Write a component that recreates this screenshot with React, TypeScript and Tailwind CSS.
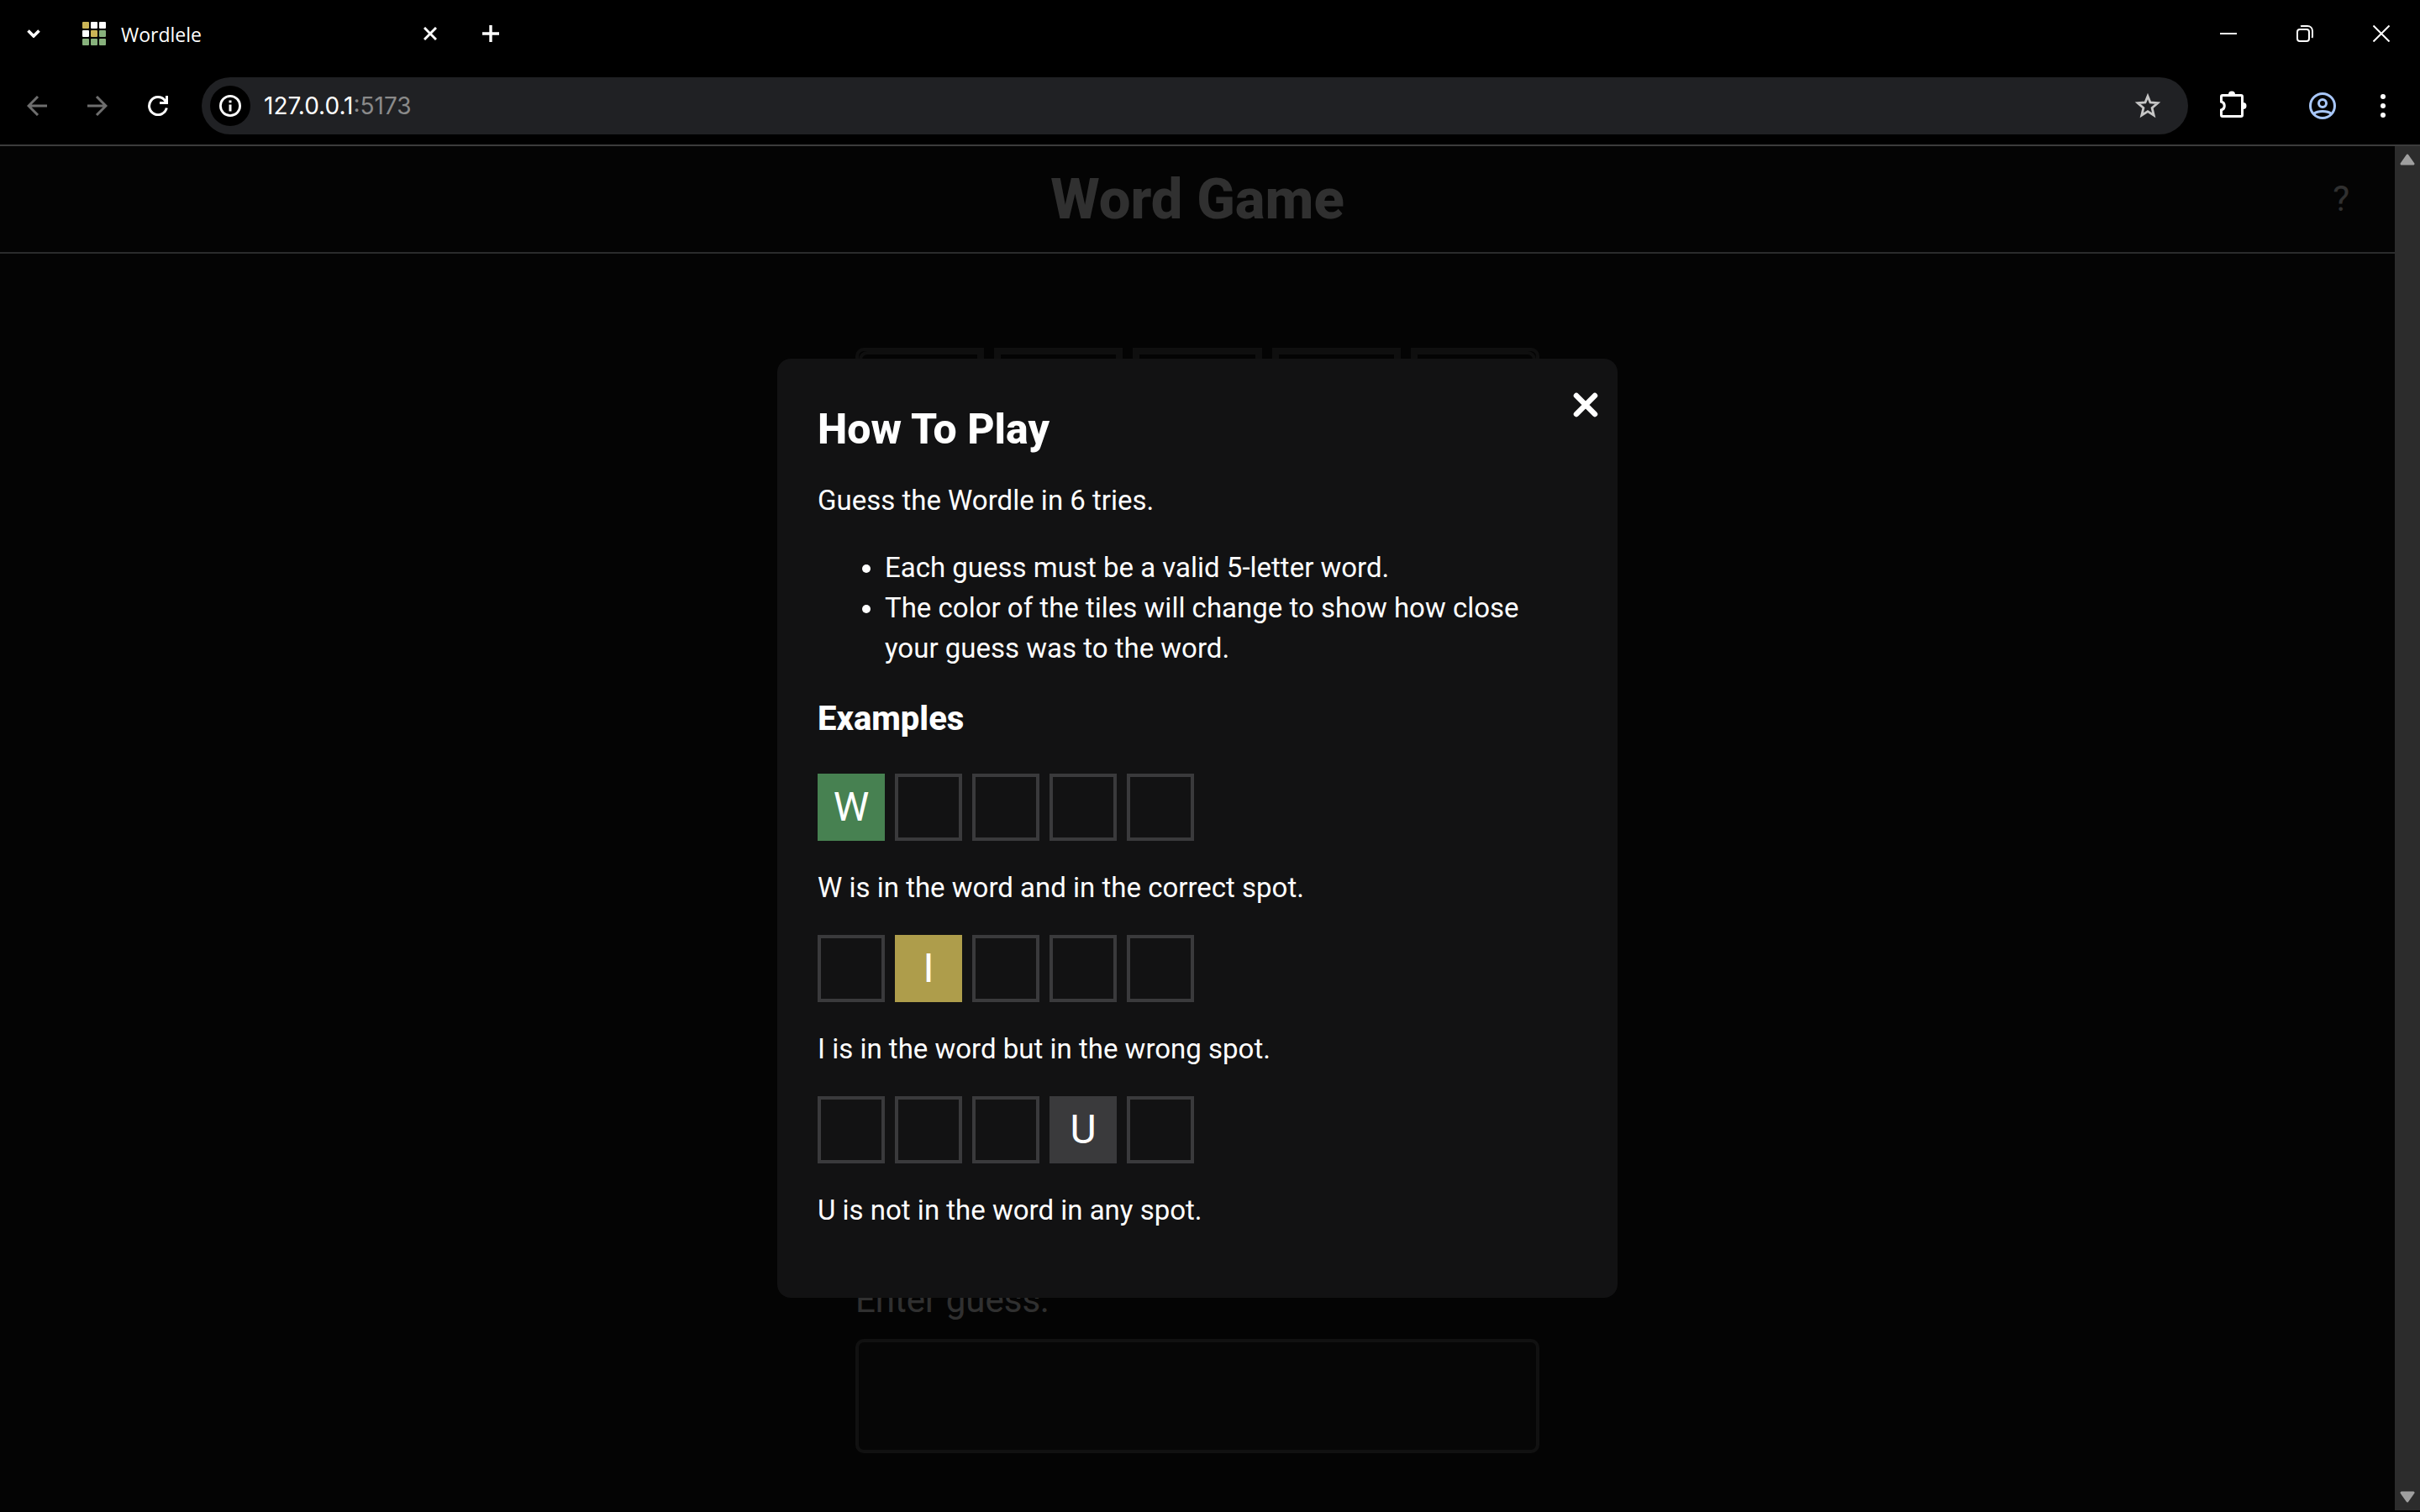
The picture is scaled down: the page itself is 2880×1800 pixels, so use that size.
import { ReactNode } from "react";

function Icon({ w, h, className = "", children }: { w: number; h: number; className?: string; children: ReactNode }) {
  return (
    <svg width={w} height={h} viewBox={`0 0 ${w} ${h}`} fill="none" stroke="currentColor" strokeWidth={3} aria-hidden="true" className={"block shrink-0 " + className}>
      {children}
    </svg>
  );
}

const FAVICON = ["#cbb556", "#ffffff", "#ffffff", "#ffffff", "#cbb556", "#87b17c", "#87b17c", "#87b17c", "#87b17c"];

function TabStrip() {
  return (
    <div className="flex h-20 items-center pr-9 pl-8">
      <button aria-label="Search tabs" className="mr-[50px]">
        <Icon w={16} h={10}><path d="M1.5 1.5 8 8 14.5 1.5" strokeWidth={3.6} /></Icon>
      </button>
      <div className="flex items-center">
        <div className="mr-[18px] grid shrink-0 grid-cols-3 gap-0.5">
          {FAVICON.map((c, i) => (
            <span key={i} className="size-2 rounded-[1px]" style={{ backgroundColor: c }} />
          ))}
        </div>
        <span className="w-[360px] pt-0.5 font-['Open_Sans',sans-serif] text-[23px] leading-8">Wordlele</span>
        <button aria-label="Close tab">
          <Icon w={16} h={16}><path d="M1 1 15 15M15 1 1 15" /></Icon>
        </button>
      </div>
      <button aria-label="New tab" className="ml-[54px]">
        <Icon w={20} h={20}><path d="M10 0V20M0 10H20" strokeWidth={3.4} /></Icon>
      </button>
      <div className="ml-auto flex items-center gap-[71px]">
        <button aria-label="Minimize"><Icon w={20} h={20}><path d="M0 10H20" strokeWidth={2} /></Icon></button>
        <button aria-label="Restore">
          <Icon w={20} h={20}>
            <rect x="1" y="5" width="14" height="14" rx="3" strokeWidth={2} />
            <path d="M5 1.2C5.600 1 6 1 7 1H13C16.500 1 19 3.500 19 7V13C19 14 18.800 14.500 18.500 15" strokeWidth={2} />
          </Icon>
        </button>
        <button aria-label="Close window"><Icon w={20} h={20}><path d="M.5.5 19.5 19.500M19.500.5.5 19.500" strokeWidth={2} /></Icon></button>
      </div>
    </div>
  );
}

function Toolbar() {
  return (
    <div className="flex h-[92px] items-center pr-[41px] pl-8">
      <button aria-label="Back" className="mr-12 text-[#6e6e6e]">
        <Icon w={24} h={24}><path d="M24 12H2M13 1 2 12 13 23" /></Icon>
      </button>
      <button aria-label="Forward" className="mr-12 text-[#6e6e6e]">
        <Icon w={24} h={24}><path d="M0 12H22M11 1 22 12 11 23" /></Icon>
      </button>
      <button aria-label="Reload" className="mr-10">
        <Icon w={24} h={24}>
          <path d="M22.300 14.500A10.500 10.500 0 1 1 20 5.200L22 7.500" />
          <path d="M22.500 0V8.500H14" />
        </Icon>
      </button>
      <div className="flex h-[68px] flex-1 items-center rounded-full bg-[#202124] pr-8 pl-2.5">
        <button aria-label="Site information" className="flex size-12 items-center justify-center rounded-full bg-black">
          <Icon w={26} h={26}>
            <circle cx="13" cy="13" r="11.6" strokeWidth={2.800} />
            <path d="M13 11.500V19.500" />
            <path d="M13 6.500V9.300" />
          </Icon>
        </button>
        <a href="http://127.0.0.1:5173" className="ml-4 flex-1 font-[Inter,sans-serif] text-[28px] leading-9">
          127.0.0.1<span className="text-[#8a8a8a]">:5173</span>
        </a>
        <button aria-label="Bookmark this page" className="text-[#c7c7c7]">
          <Icon w={32} h={32}>
            <path d="M16 4.500 19 12 27.800 12.700 21.100 18.400 23.200 27.200 16 22.600 8.800 27.200 10.900 18.400 4.200 12.700 13 12Z" strokeWidth={2.800} />
          </Icon>
        </button>
      </div>
      <button aria-label="Extensions" className="ml-[38px]">
        <Icon w={32} h={36}>
          <path d="M3 5.500H25Q26.500 5.500 26.500 7V29Q26.500 30.500 25 30.500H3Q1.500 30.500 1.500 29V23A5.200 5.200 0 0 0 1.500 13V7Q1.500 5.500 3 5.500Z" />
          <path d="M10 4.500A4 4 0 0 1 18 4.500ZM27.500 14A4 4 0 0 1 27.500 22Z" fill="currentColor" stroke="none" />
        </Icon>
      </button>
      <button aria-label="Profile" className="ml-[74px] text-[#a8c7fa]">
        <Icon w={32} h={32}>
          <circle cx="16" cy="16" r="14.5" />
          <circle cx="16" cy="13" r="4.5" />
          <path d="M5.500 25.500C8 23.500 12 22.500 16 22.500S24 23.500 26.500 25.500" />
        </Icon>
      </button>
      <button aria-label="Menu" className="ml-[53px]">
        <Icon w={6} h={28}>
          <g fill="currentColor" stroke="none">
            <circle cx="3" cy="3" r="3" />
            <circle cx="3" cy="14" r="3" />
            <circle cx="3" cy="25" r="3" />
          </g>
        </Icon>
      </button>
    </div>
  );
}

function Scrollbar() {
  return (
    <div className="flex w-[30px] shrink-0 flex-col items-center justify-between bg-[#2c2c2c] py-[9px] text-[#9f9f9f]">
      <button aria-label="Scroll up">
        <Icon w={18} h={14}><path d="M9 2 16 12H2Z" fill="currentColor" strokeLinejoin="round" /></Icon>
      </button>
      <button aria-label="Scroll down">
        <Icon w={18} h={14}><path d="M9 12 16 2H2Z" fill="currentColor" strokeLinejoin="round" /></Icon>
      </button>
    </div>
  );
}

function corner(i: number) {
  if (i === 0) return "rounded-tl-[10px]";
  if (i === 4) return "rounded-tr-[10px]";
  if (i === 25) return "rounded-bl-[10px]";
  if (i === 29) return "rounded-br-[10px]";
  return "";
}

function Game() {
  return (
    <div className="flex-1 overflow-hidden bg-[#141414] text-[#f0f0f0]">
      <header className="grid h-32 grid-cols-[1fr_auto_1fr] items-center border-b-2 border-[#d3d6da] px-[54px]">
        <h1 className="col-start-2 text-[67px] leading-[80px] font-extrabold">Word Game</h1>
        <button aria-label="How to play" className="justify-self-end text-[42px] leading-[48px]">?</button>
      </header>
      <main className="mx-auto mt-28 w-full max-w-[814px]">
        <div className="grid grid-cols-5 gap-3">
          {Array.from({ length: 30 }, (_, i) => (
            <div key={i} className={"h-[153px] border-4 border-[#4c4c4c] " + corner(i)}>
              <div className={"h-full border-4 border-[#4c4c4c] " + corner(i)} />
            </div>
          ))}
        </div>
        <label htmlFor="guess" className="mt-[132px] block text-[42px] leading-[48px]">Enter guess:</label>
        <input id="guess" type="text" className="mt-[22px] block h-[136px] w-full rounded-[10px] border-4 border-[#555] bg-[#1e1e1e] px-6 text-[42px]" />
      </main>
    </div>
  );
}

const EXAMPLES = [
  { letter: "W", at: 0, fill: "border-[#478151] bg-[#478151]", text: "W is in the word and in the correct spot." },
  { letter: "I", at: 1, fill: "border-[#ae9d4b] bg-[#ae9d4b]", text: "I is in the word but in the wrong spot." },
  { letter: "U", at: 3, fill: "border-[#3a3a3c] bg-[#3a3a3c]", text: "U is not in the word in any spot." },
];

function HowToPlay() {
  return (
    <section role="dialog" aria-labelledby="how-title" className="relative w-[1000px] max-w-full rounded-2xl bg-[#121213] p-12 text-[33px] leading-[48px] text-white">
      <button aria-label="Close" className="absolute top-10 right-[23px]">
        <Icon w={30} h={30}><path d="M4 4 26 26M26 4 4 26" strokeWidth={6.500} strokeLinecap="round" /></Icon>
      </button>
      <h2 id="how-title" className="text-[50px] leading-[72px] font-extrabold">How To Play</h2>
      <p className="mt-[25px]">Guess the Wordle in 6 tries.</p>
      <ul className="mt-8 list-disc pl-20">
        <li>Each guess must be a valid 5-letter word.</li>
        <li>The color of the tiles will change to show how close your guess was to the word.</li>
      </ul>
      <h3 className="mt-[34px] mb-[39px] text-[40px] leading-[52px] font-extrabold">Examples</h3>
      {EXAMPLES.map((e) => (
        <div key={e.letter} className="mb-8">
          <div className="flex gap-3">
            {[0, 1, 2, 3, 4].map((i) => (
              <div key={i} className={"flex size-20 items-center justify-center border-4 text-5xl " + (i === e.at ? e.fill : "border-[#3a3a3c]")}>
                {i === e.at ? e.letter : ""}
              </div>
            ))}
          </div>
          <p className="mt-8">{e.text}</p>
        </div>
      ))}
    </section>
  );
}

export default function App() {
  return (
    <div className="flex h-screen flex-col bg-black pb-0.5 font-[Roboto,sans-serif] text-white">
      <div className="shrink-0 border-b-2 border-[#3c3c3c]">
        <TabStrip />
        <Toolbar />
      </div>
      <div className="flex min-h-0 flex-1">
        <div className="relative flex min-w-0 flex-1">
          <Game />
          <div className="absolute inset-0 grid place-items-center bg-black/80">
            <HowToPlay />
          </div>
        </div>
        <Scrollbar />
      </div>
    </div>
  );
}
